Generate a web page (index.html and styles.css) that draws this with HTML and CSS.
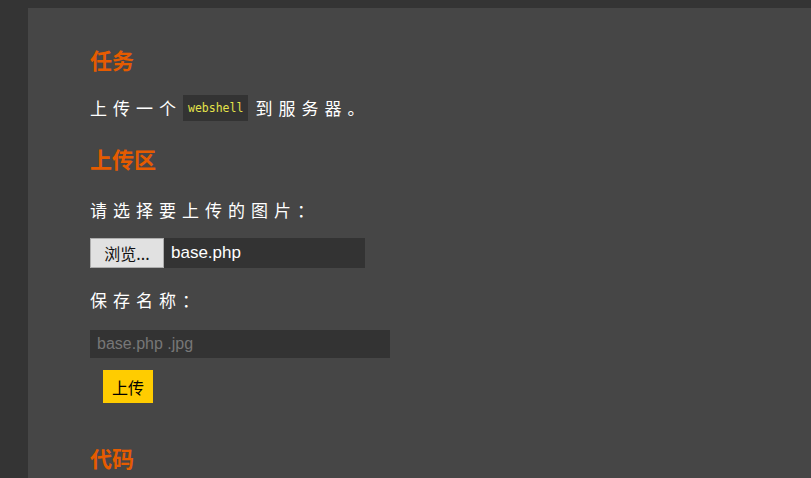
FILE: index.html
```html
<!DOCTYPE html>
<html lang="zh">
<head>
<meta charset="utf-8">
<title>upload</title>
<link rel="stylesheet" href="styles.css">
</head>
<body>
<div class="panel">
  <h2 class="title t-task">任务</h2>
  <p class="text t-desc">上传一个<code class="code">webshell</code>到服务器。</p>
  <h2 class="title t-area">上传区</h2>
  <p class="text t-choose">请选择要上传的图片：</p>
  <div class="file">
    <span class="file-btn">浏览...</span>
    <span class="file-name">base.php</span>
  </div>
  <p class="text t-save">保存名称：</p>
  <div class="input">base.php .jpg</div>
  <div class="submit">上传</div>
  <h2 class="title t-code">代码</h2>
</div>
</body>
</html>
```
FILE: styles.css
```css
html, body {
  margin: 0;
  padding: 0;
  background: #343434;
  height: 100%;
  overflow: hidden;
}
.panel {
  box-sizing: border-box;
  margin: 8px 0 0 28px;
  background: #464646;
  height: 470px;
  overflow: hidden;
  padding: 36px 0 0 62px;
  display: flex;
  flex-direction: column;
  align-items: flex-start;
  font-family: "Noto Sans CJK SC", "Liberation Sans", sans-serif;
}
.title {
  margin: 0;
  font-size: 22px;
  line-height: 30px;
  font-weight: bold;
  color: #e55b00;
}
.text {
  margin: 0;
  font-size: 17px;
  line-height: 30px;
  color: #ffffff;
  letter-spacing: 6px;
  display: flex;
  align-items: center;
}
.code {
  display: inline-block;
  background: #333333;
  color: #e4e44a;
  font-family: "DejaVu Sans Mono", "Liberation Mono", monospace;
  font-size: 11.5px;
  letter-spacing: 0;
  line-height: 26px;
  height: 26px;
  padding: 0 5px;
  margin: 0 7px 0 1px;
}
.t-desc { margin-top: 19px; }
.t-area { margin-top: 20px; }
.t-choose { margin-top: 22px; }
.file {
  margin-top: 13px;
  width: 275px;
  height: 30px;
  background: #333333;
  display: flex;
  align-items: center;
}
.file-btn {
  box-sizing: border-box;
  width: 74px;
  height: 30px;
  background: #e1e1e1;
  border: 1px solid #adadad;
  color: #111;
  font-size: 16px;
  display: flex;
  align-items: center;
  justify-content: center;
}
.file-name {
  margin-left: 7px;
  color: #fff;
  font-family: "Liberation Sans", sans-serif;
  font-size: 17px;
}
.t-save { margin-top: 17px; }
.input {
  margin-top: 15px;
  box-sizing: border-box;
  width: 300px;
  height: 28px;
  background: #333333;
  color: #777777;
  font-family: "Liberation Sans", sans-serif;
  font-size: 16px;
  line-height: 28px;
  padding-left: 7px;
}
.submit {
  margin: 12px 0 0 13px;
  width: 50px;
  height: 33px;
  background: #ffcc00;
  color: #000;
  font-size: 16px;
  display: flex;
  align-items: center;
  justify-content: center;
}
.t-code { margin-top: 39px; }
```
